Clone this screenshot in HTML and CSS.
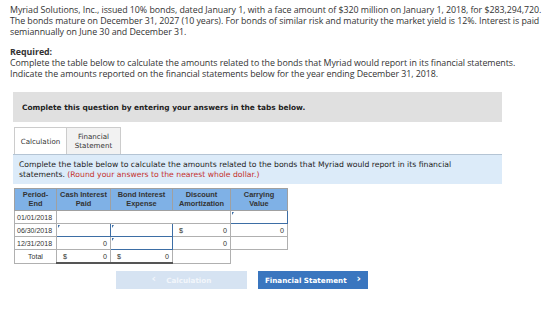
FILE: index.html
```html
<!DOCTYPE html>
<html>
<head>
<meta charset="utf-8">
<link rel="stylesheet" href="styles.css">
</head>
<body>
<p class="intro">Myriad Solutions, Inc., issued 10% bonds, dated January 1, with a face amount of $320 million on January 1, 2018, for $283,294,720. The bonds mature on December 31, 2027 (10 years). For bonds of similar risk and maturity the market yield is 12%. Interest is paid semiannually on June 30 and December 31.</p>
<div class="required">
  <div class="req-title">Required:</div>
  <div>Complete the table below to calculate the amounts related to the bonds that Myriad would report in its financial statements.</div>
  <div>Indicate the amounts reported on the financial statements below for the year ending December 31, 2018.</div>
</div>
<div class="question">
  <div class="banner">Complete this question by entering your answers in the tabs below.</div>
  <div class="tabs">
    <div class="tab active">Calculation</div>
    <div class="tab">Financial<br>Statement</div>
  </div>
  <div class="instr"><span>Complete the table below to calculate the amounts related to the bonds that Myriad would report in its financial statements.</span><span class="red">(Round your answers to the nearest whole dollar.)</span></div>
  <table class="grid">
    <colgroup><col class="c1"><col class="c2"><col class="c3"><col class="c4"><col class="c5"></colgroup>
    <thead>
      <tr><th>Period-<br>End</th><th>Cash Interest<br>Paid</th><th>Bond Interest<br>Expense</th><th>Discount<br>Amortization</th><th>Carrying<br>Value</th></tr>
    </thead>
    <tbody>
      <tr><td class="lbl">01/01/2018</td><td colspan="3" class="blank"></td><td class="inp"></td></tr>
      <tr><td class="lbl">06/30/2018</td><td class="inp"></td><td class="inp"></td><td><div class="amt"><span>$</span><span>0</span></div></td><td><div class="amt"><span></span><span>0</span></div></td></tr>
      <tr><td class="lbl">12/31/2018</td><td><div class="amt"><span></span><span>0</span></div></td><td class="inp"></td><td><div class="amt"><span></span><span>0</span></div></td><td></td></tr>
      <tr class="total"><td class="lbl ctr">Total</td><td class="tot"><div class="amt"><span>$</span><span>0</span></div></td><td class="tot"><div class="amt"><span>$</span><span>0</span></div></td><td></td><td class="none"></td></tr>
    </tbody>
  </table>
  <div class="nav">
    <div class="btn prev"><span class="chev">&lsaquo;</span>Calculation</div>
    <div class="btn next">Financial Statement<span class="chev after">&rsaquo;</span></div>
  </div>
</div>
</body>
</html>
```
FILE: styles.css
```css
html, body { margin: 0; padding: 0; background: #fff; }
body { color: #333; font-family: "Open Sans", "Liberation Sans", sans-serif; }
.intro { margin: 0; padding: 5px 10px 0; font-size: 8.85px; line-height: 11px; color: #333; letter-spacing: -0.05px; }
.required { padding: 9px 10px 0; font-size: 8.85px; line-height: 11px; color: #333; letter-spacing: -0.05px; }
.req-title { font-weight: bold; }
.question { margin: 12px 0 0 13px; width: 489px; font-family: "DejaVu Sans", Verdana, sans-serif; }
.banner { background: #e0e0e0; height: 30px; display: flex; align-items: center; padding-left: 9px; font-size: 7.4px; font-weight: bold; color: #222; }
.tabs { display: flex; margin-top: 5px; height: 27px; padding-left: 1px; }
.tab { width: 52px; display: flex; align-items: center; justify-content: center; text-align: center; font-size: 7.1px; line-height: 9px; color: #333; border: 1px solid #ccc; border-bottom: none; background: #f2f2f2; box-sizing: border-box; }
.tab.active { background: #fff; width: 53px; }
.tab + .tab { border-left: none; width: 54px; }
.instr { background: #dcebf9; border-top: 1px solid #b4c4d4; height: 30px; box-sizing: border-box; padding: 5px 40px 0 6px; font-size: 7.7px; line-height: 10px; color: #222; }
.red { color: #c4312d; margin-left: 0.3em; }
.grid { margin: 4px 0 0 1px; border-collapse: collapse; table-layout: fixed; width: 273px; font-family: "Liberation Sans", Arial, sans-serif; font-size: 7.2px; color: #333; }
.c1 { width: 42px; } .c2 { width: 54px; } .c3 { width: 62px; } .c4 { width: 58px; } .c5 { width: 57px; }
.grid th { background: #7fb1e6; border: 1px solid #a0a0a0; height: 21px; padding: 0; font-weight: bold; font-size: 7.4px; line-height: 8.8px; color: #333; text-align: center; }
.grid td { border: 1px solid #b0b0b0; height: 12px; padding: 0 2px; background: #fff; position: relative; }
.grid td.lbl { padding-left: 2px; font-size: 7px; }
.grid td.ctr { text-align: center; }
.grid td.inp { border: 1px solid #3d6ea5; }
.grid td.inp::before { content: ""; position: absolute; left: 1px; top: 1px; width: 0; height: 0; border-top: 3px solid #3d6ea5; border-right: 2px solid transparent; }
.grid td.tot { border-bottom: 2px solid #555; }
.grid td.none { border: none; background: transparent; }
.amt { display: flex; justify-content: space-between; padding: 0 1px 0 4px; }
.nav { display: flex; gap: 11px; margin: 7px 0 0 103px; }
.btn { height: 18px; display: flex; align-items: center; justify-content: center; font-size: 7.2px; font-weight: bold; color: #fff; }
.chev { font-size: 11px; line-height: 10px; margin-right: 10px; position: relative; top: -1px; }
.chev.after { margin: 0 0 0 10px; }
.prev { width: 131px; background: #d6e3f2; color: #f2f6fb; }
.next { width: 110px; background: #3a76bf; }
```
